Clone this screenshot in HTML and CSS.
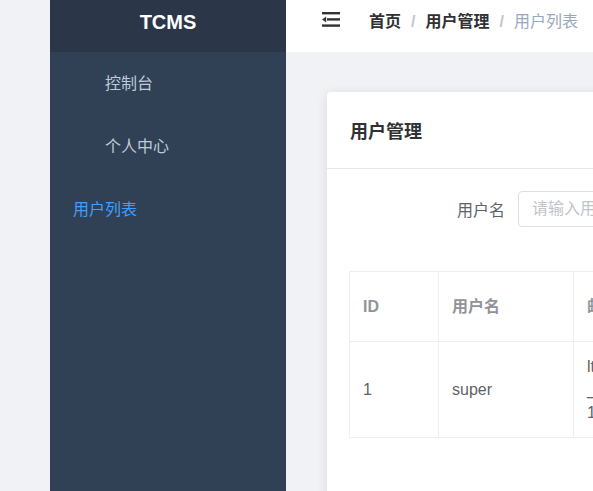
FILE: index.html
```html
<!DOCTYPE html>
<html lang="zh">
<head>
<meta charset="utf-8">
<title>TCMS</title>
<link rel="stylesheet" href="styles.css">
</head>
<body>
<div class="app">
  <div class="gutter"></div>
  <aside class="sidebar">
    <div class="logo">TCMS</div>
    <ul class="menu">
      <li class="menu-item sub">控制台</li>
      <li class="menu-item sub">个人中心</li>
      <li class="menu-item active">用户列表</li>
    </ul>
  </aside>
  <div class="main">
    <header class="navbar">
      <span class="hamburger">
        <svg width="18" height="16" viewBox="0 0 18 16">
          <rect x="0" y="0" width="18" height="2.4" fill="#333"/>
          <rect x="5" y="6.2" width="13" height="2.4" fill="#333"/>
          <path d="M0 7.4 L4.2 4.4 L4.2 10.4 Z" fill="#333"/>
          <rect x="0" y="12.4" width="18" height="2.4" fill="#333"/>
        </svg>
      </span>
      <nav class="breadcrumb">
        <span class="crumb strong">首页</span>
        <span class="sep">/</span>
        <span class="crumb strong">用户管理</span>
        <span class="sep">/</span>
        <span class="crumb current">用户列表</span>
      </nav>
    </header>
    <section class="content">
      <div class="card">
        <div class="card-header">用户管理</div>
        <div class="card-body">
          <form class="search">
            <label class="label">用户名</label>
            <input class="input" type="text" placeholder="请输入用户名">
          </form>
          <table class="table">
            <thead>
              <tr>
                <th class="c-id">ID</th>
                <th class="c-name">用户名</th>
                <th class="c-mail">邮箱</th>
              </tr>
            </thead>
            <tbody>
              <tr>
                <td>1</td>
                <td>super</td>
                <td class="multi">ltc@tcms.com<br>_____<br>13800000000</td>
              </tr>
            </tbody>
          </table>
        </div>
      </div>
    </section>
  </div>
</div>
</body>
</html>
```

FILE: styles.css
```css
* { box-sizing: border-box; }
html, body {
  margin: 0;
  padding: 0;
  width: 593px;
  height: 491px;
  overflow: hidden;
  background: #f0f2f5;
  font-family: "Liberation Sans", "Noto Sans CJK SC", sans-serif;
}
.app {
  display: flex;
  height: 491px;
}
.gutter {
  width: 50px;
  flex: none;
  background: #f0f2f5;
}
.sidebar {
  width: 236px;
  flex: none;
  background: #304156;
  display: flex;
  flex-direction: column;
}
.logo {
  height: 52px;
  background: #2b3649;
  color: #fff;
  font-weight: bold;
  font-size: 20px;
  display: flex;
  align-items: center;
  justify-content: center;
  padding-bottom: 8px;
}
.menu {
  list-style: none;
  margin: 0;
  padding: 0;
}
.menu-item {
  height: 63px;
  display: flex;
  align-items: center;
  font-size: 16px;
  color: #bfcbd9;
  padding-left: 23px;
  padding-bottom: 4px;
}
.menu-item.sub { padding-left: 55px; }
.menu-item.active { color: #409eff; }
.main {
  flex: 1;
  min-width: 0;
  overflow: hidden;
  display: flex;
  flex-direction: column;
}
.navbar {
  height: 52px;
  flex: none;
  background: #fff;
  display: flex;
  align-items: flex-start;
  padding-left: 36px;
}
.hamburger {
  display: flex;
  width: 18px;
  height: 16px;
  margin-top: 12px;
}
.breadcrumb {
  margin-left: 29px;
  margin-top: 12px;
  font-size: 16px;
  line-height: 20px;
  display: flex;
  align-items: center;
  white-space: nowrap;
}
.crumb.strong { color: #303133; font-weight: bold; }
.crumb.current { color: #97a8be; }
.sep {
  color: #c0c4cc;
  margin: 0 10px;
  font-weight: bold;
}
.content {
  flex: 1;
  padding: 40px 0 0 41px;
}
.card {
  width: 900px;
  height: 600px;
  background: #fff;
  border-radius: 4px;
  box-shadow: 0 2px 12px rgba(0, 0, 0, 0.1);
}
.card-header {
  height: 77px;
  border-bottom: 1px solid #e6e8ee;
  padding-left: 23px;
  display: flex;
  align-items: center;
  font-size: 18px;
  font-weight: bold;
  color: #303133;
}
.card-body {
  padding: 22px 22px 0 22px;
}
.search {
  display: flex;
  align-items: center;
  margin: 0 0 44px 108px;
}
.label {
  font-size: 16px;
  color: #606266;
  margin-right: 13px;
}
.input {
  width: 220px;
  height: 36px;
  border: 1px solid #dcdfe6;
  border-radius: 4px;
  padding: 0 13px;
  font-size: 16px;
  font-family: inherit;
  color: #606266;
  outline: none;
}
.input::placeholder { color: #c0c4cc; }
.table {
  border-collapse: collapse;
  width: 700px;
  font-size: 16px;
  color: #606266;
}
.table th, .table td {
  border: 1px solid #ebeef5;
  text-align: left;
  padding: 0 13px;
  line-height: 23px;
  vertical-align: middle;
}
.table th {
  height: 70px;
  color: #909399;
  font-weight: bold;
}
.table td { height: 96px; }
.c-id { width: 89px; }
.c-name { width: 135px; }
```
